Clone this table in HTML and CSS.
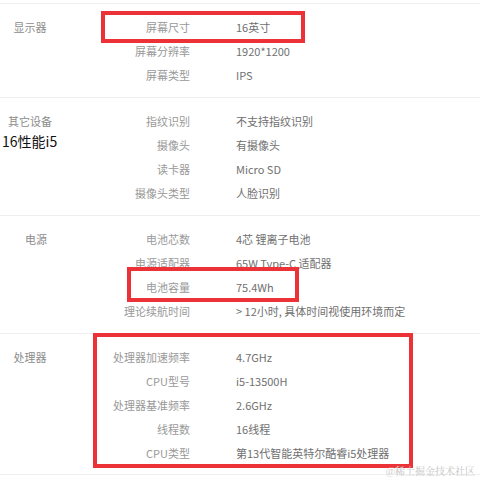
FILE: index.html
```html
<!DOCTYPE html>
<html lang="zh-CN">
<head>
<meta charset="utf-8">
<title>参数</title>
<link rel="stylesheet" href="styles.css">
</head>
<body>
<div class="page">
  <section class="group">
    <div class="group-name">显示器</div>
    <div class="rows">
      <div class="row"><span class="label">屏幕尺寸</span><span class="value">16英寸</span></div>
      <div class="row"><span class="label">屏幕分辨率</span><span class="value">1920*1200</span></div>
      <div class="row"><span class="label">屏幕类型</span><span class="value">IPS</span></div>
    </div>
  </section>
  <section class="group">
    <div class="group-name">其它设备</div>
    <div class="rows">
      <div class="row"><span class="label">指纹识别</span><span class="value">不支持指纹识别</span></div>
      <div class="row"><span class="label">摄像头</span><span class="value">有摄像头</span></div>
      <div class="row"><span class="label">读卡器</span><span class="value">Micro SD</span></div>
      <div class="row"><span class="label">摄像头类型</span><span class="value">人脸识别</span></div>
    </div>
  </section>
  <section class="group">
    <div class="group-name group-name--shift">电源</div>
    <div class="rows">
      <div class="row"><span class="label">电池芯数</span><span class="value">4芯 锂离子电池</span></div>
      <div class="row"><span class="label">电源适配器</span><span class="value">65W Type-C 适配器</span></div>
      <div class="row"><span class="label">电池容量</span><span class="value">75.4Wh</span></div>
      <div class="row"><span class="label">理论续航时间</span><span class="value">&gt; 12小时, 具体时间视使用环境而定</span></div>
    </div>
  </section>
  <section class="group group--last">
    <div class="group-name">处理器</div>
    <div class="rows">
      <div class="row"><span class="label">处理器加速频率</span><span class="value">4.7GHz</span></div>
      <div class="row"><span class="label">CPU型号</span><span class="value">i5-13500H</span></div>
      <div class="row"><span class="label">处理器基准频率</span><span class="value">2.6GHz</span></div>
      <div class="row"><span class="label">线程数</span><span class="value">16线程</span></div>
      <div class="row"><span class="label">CPU类型</span><span class="value">第13代智能英特尔酷睿i5处理器</span></div>
    </div>
  </section>

  <div class="mark mark--one"></div>
  <div class="mark mark--two"></div>
  <div class="mark mark--three"></div>
  <div class="overlay-title">16性能i5</div>
  <div class="watermark">@稀土掘金技术社区</div>
</div>
</body>
</html>
```
FILE: styles.css
```css
* { box-sizing: border-box; }
html, body {
  margin: 0;
  padding: 0;
  background: #fff;
}
body {
  font-family: "Noto Sans CJK SC", "Noto Sans", sans-serif;
  font-size: 11px;
  color: #666;
  width: 480px;
  height: 480px;
  overflow: hidden;
}
.page {
  position: relative;
  padding-top: 3px;
}
.group {
  display: grid;
  grid-template-columns: 60px 1fr;
  border-top: 1px solid #efefef;
  padding: 11px 0 10px;
}
.group--last {
  border-bottom: 1px solid #efefef;
  padding-bottom: 9px;
}
.group-name {
  text-align: center;
  color: #8c8c8c;
  line-height: 24px;
}
.group-name--shift {
  padding-left: 12px;
}
.rows {
  display: flex;
  flex-direction: column;
}
.row {
  display: grid;
  grid-template-columns: 130px 1fr;
  column-gap: 46px;
  line-height: 24px;
  height: 24px;
  white-space: nowrap;
}
.label {
  text-align: right;
  color: #999;
}
.value {
  color: #707070;
}
.mark {
  position: absolute;
  border: 4px solid #ec3237;
}
.mark--one {
  left: 101px;
  top: 11px;
  width: 204px;
  height: 32px;
}
.mark--two {
  left: 127px;
  top: 267px;
  width: 172px;
  height: 35px;
}
.mark--three {
  left: 93px;
  top: 333px;
  width: 320px;
  height: 135px;
}
.overlay-title {
  position: absolute;
  left: 2px;
  top: 131px;
  font-size: 14px;
  line-height: 20px;
  color: #111;
}
.watermark {
  position: absolute;
  left: 386px;
  top: 464px;
  font-family: "Noto Serif CJK SC", "Noto Sans CJK SC", serif;
  font-size: 10px;
  line-height: 14px;
  color: #c4c4c4;
  white-space: nowrap;
}
```
